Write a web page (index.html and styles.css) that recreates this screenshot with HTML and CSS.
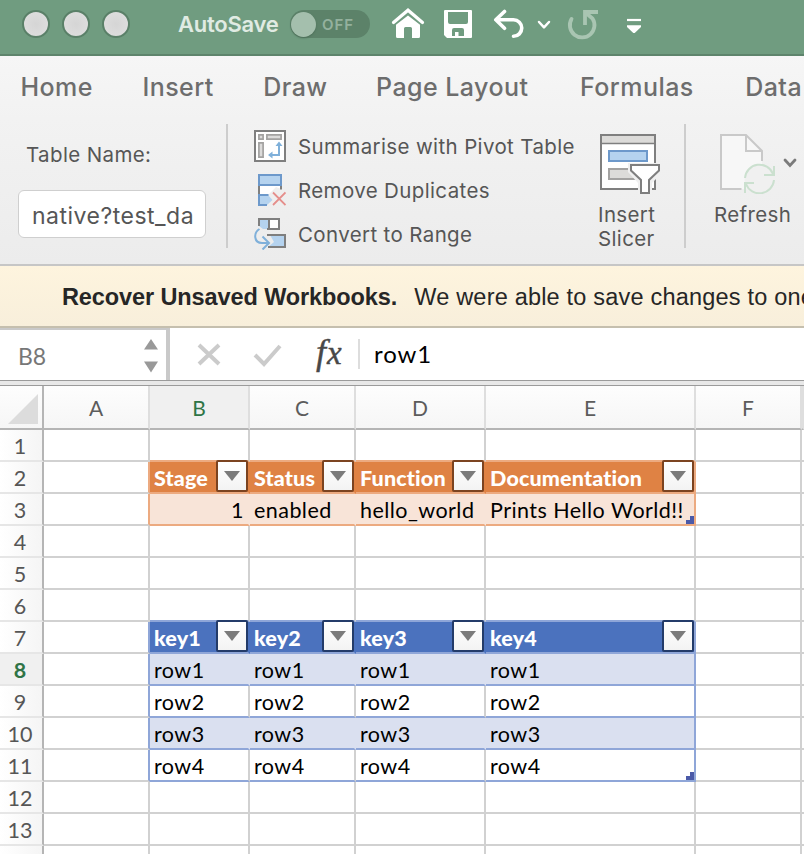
FILE: index.html
```html
<!DOCTYPE html>
<html lang="en">
<head>
<meta charset="utf-8">
<title>Workbook</title>
<link rel="stylesheet" href="styles.css">
</head>
<body>
<header class="titlebar">
  <div class="lights"><span></span><span></span><span></span></div>
  <span class="autosave">AutoSave</span>
  <div class="toggle"><span class="knob"></span><span class="off">OFF</span></div>
  <svg class="quick" width="270" height="54" viewBox="380 0 270 54" fill="none" stroke="#fff">
    <path d="M393.500 22.500L408 10.200L422.500 22.500" stroke-width="3.200" stroke-linecap="round"/>
    <path d="M396 24.800L408 15.400L420 24.800V36.500Q420 38 418.500 38H412V28.500Q412 27 410.500 27H405.500Q404 27 404 28.500V38H397.500Q396 38 396 36.500Z" fill="#fff" stroke="none"/>
    <path fill="#fff" stroke="none" fill-rule="evenodd" d="M445 10H471Q472 10 472 11V37Q472 38 471 38H447L444 35V11Q444 10 445 10ZM448 12V22Q448 24 450 24H466Q468 24 468 22V12ZM454 28Q452 28 452 30V36H455V32H458.500V36H464V30Q464 28 462 28Z"/>
    <path d="M504.500 11.500L495.800 19.800L504.500 28.300M496.500 19.800H513.500A8 8 0 0 1 513.500 36.300" stroke-width="3.600" stroke-linecap="round" stroke-linejoin="round"/>
    <path d="M539 22L544 27.300L549 22" stroke-width="2.500" stroke-linecap="round" stroke-linejoin="round"/>
    <g stroke="#a9c5b2" stroke-width="3.800"><path d="M571.500 19A12.300 12.300 0 1 0 592.500 18.500L586 13" stroke-linecap="round"/><path d="M598 12H585V25"/></g>
    <path d="M627 20H641" stroke-width="2.200"/><path d="M627 25.300H641V27L634.700 33H633.300L627 27Z" fill="#fff" stroke="none"/>
  </svg>
</header>
<section class="ribbon">
  <nav class="tabs"><a>Home</a><a>Insert</a><a>Draw</a><a class="tight">Page Layout</a><a class="loose">Formulas</a><a class="loose">Data</a></nav>
  <div class="tools">
    <div class="name-group"><label>Table Name:</label><div class="field">native?test_da</div></div>
    <div class="commands">
      <div class="command">
        <svg width="32" height="32" fill="none"><path d="M1 1H31V31H1Z" fill="#fff" stroke="#7f7f7f" stroke-width="2"/><g fill="#dcdbda" stroke="#a3a2a1" stroke-width="1.700"><path d="M4.900 4.900H9.100V9.100H4.900ZM12.900 4.900H27.100V9.100H12.900ZM4.900 12.900H9.100V27.100H4.900Z"/></g><path d="M25 15V25H17" stroke="#7fb0da" stroke-width="2"/><path d="M21.500 16L25 11.500L28.500 16ZM18.500 21.500L14 25L18.500 28.500Z" fill="#7fb0da"/></svg>
        <span>Summarise with Pivot Table</span>
      </div>
      <div class="command">
        <svg width="32" height="32" fill="none"><path d="M5 12V20H15L22 13L27 15V12Z" fill="#fff"/><path d="M5 12V21M27 12V15.500" stroke="#7f7f7f" stroke-width="2"/><path d="M5 1H27V11H5Z" fill="#b5d3ef" stroke="#6d99cb" stroke-width="2"/><path d="M5 21H14L18.500 26L13 31H5Z" fill="#b5d3ef"/><path d="M14.500 21H5V31H13" stroke="#6d99cb" stroke-width="2"/><path d="M19 18.500L31.500 31M31.500 18.500L19 31" stroke="#e58e8b" stroke-width="1.800"/></svg>
        <span>Remove Duplicates</span>
      </div>
      <div class="command">
        <svg width="32" height="32" fill="none"><path d="M5 1H15V11H9L5 8Z" fill="#b5d3ef"/><path d="M16 1H25V11H16Z" fill="#fff"/><path d="M5 8V1H25V11H13M15 1V11" stroke="#7f7f7f" stroke-width="2"/><path d="M16 17H31V29H14L20 24Z" fill="#b5d3ef"/><path d="M13 17H31V29H14" stroke="#7f7f7f" stroke-width="2"/><path d="M5.500 11C-1 15 0 25 8 25H14M8.500 18.500L15 25L8.500 31.500" stroke="#7fb0da" stroke-width="2"/></svg>
        <span>Convert to Range</span>
      </div>
    </div>
    <div class="big slicer">
      <svg width="60" height="60" fill="none"><path d="M1 1H55V55H1Z" fill="#fff" stroke="#7f7f7f" stroke-width="2"/><path d="M2 2H54V9H2Z" fill="#dcdbd9"/><path d="M1 9.500H55" stroke="#7f7f7f" stroke-width="1.600"/><path d="M9 17H47V27H9Z" fill="#b5d3ef" stroke="#6d99cb" stroke-width="2"/><path d="M9 35H40V45H9Z" fill="#dcdbd9" stroke="#a3a2a1" stroke-width="2"/><path d="M28 29H62V39L52 49V62H38V49L28 38Z" fill="#f0f0f0"/><path d="M31 31H59V36.500L49 46V59H41V46L31 36.500Z" fill="#fff" stroke="#7f7f7f" stroke-width="2"/></svg>
      <span>Insert<br>Slicer</span>
    </div>
    <div class="big refresh">
      <svg width="78" height="60" viewBox="0 0 78 60" fill="none"><path d="M1 1H26L42 17V30L26 55H1Z" fill="#f7f7f7"/><path d="M21.500 55H1V1H26L42 17V27M26 1V17H42" stroke="#c9c9c9" stroke-width="2"/><path d="M39 30.500A14.500 14.500 0 1 0 39 59.500A14.500 14.500 0 0 0 39 30.500" fill="#f0f0f0"/><g stroke="#cbe0cf" stroke-width="2"><path d="M25 44A14.500 14.500 0 0 1 53 40M54 32V41H44M54 46A14.500 14.500 0 0 1 26 50M25 59V49H34"/></g><path d="M65 26L70 31.500L75 26" stroke="#7b7b7b" stroke-width="2.800" stroke-linecap="round"/></svg>
      <span>Refresh</span>
    </div>
  </div>
</section>
<div class="message"><b>Recover Unsaved Workbooks.</b><span>We were able to save changes to one</span></div>
<div class="formula">
  <div class="namebox"><span>B8</span><svg width="14" height="34"><path d="M7 0L14 10.500H0ZM0 22.500H14L7 33.500Z" fill="#999"/></svg></div>
  <svg class="actions" width="90" height="30" fill="none" stroke="#cbcbcb" stroke-width="4"><path d="M3 6L23 25M23 6L3 25"/><path d="M59 16L68 25L84 7"/></svg>
  <span class="fx"><i>f</i><i class="x">x</i></span>
  <span class="value">row1</span>
</div>
<div class="split"></div>
<main class="sheet">
  <div class="row head"><span class="corner"><svg width="30" height="30"><path d="M30 0V30H0Z" fill="#dcdcdc"/></svg></span><span>A</span><span class="on">B</span><span>C</span><span>D</span><span>E</span><span>F</span><span></span></div>
  <div class="row above-orange"><b>1</b><i></i><i></i><i></i><i></i><i></i><i></i><i></i></div>
  <div class="row orange th"><b>2</b><i></i><i>Stage<u></u></i><i>Status<u></u></i><i>Function<u></u></i><i>Documentation<u></u></i><i></i><i></i></div>
  <div class="row orange band"><b>3</b><i></i><i class="num">1</i><i>enabled</i><i>hello_world</i><i>Prints Hello World!!<s></s></i><i></i><i></i></div>
  <div class="row"><b>4</b><i></i><i></i><i></i><i></i><i></i><i></i><i></i></div>
  <div class="row"><b>5</b><i></i><i></i><i></i><i></i><i></i><i></i><i></i></div>
  <div class="row above-blue"><b>6</b><i></i><i></i><i></i><i></i><i></i><i></i><i></i></div>
  <div class="row blue th"><b>7</b><i></i><i>key1<u></u></i><i>key2<u></u></i><i>key3<u></u></i><i>key4<u></u></i><i></i><i></i></div>
  <div class="row blue band"><b class="on">8</b><i></i><i>row1</i><i>row1</i><i>row1</i><i>row1</i><i></i><i></i></div>
  <div class="row blue"><b>9</b><i></i><i>row2</i><i>row2</i><i>row2</i><i>row2</i><i></i><i></i></div>
  <div class="row blue band"><b>10</b><i></i><i>row3</i><i>row3</i><i>row3</i><i>row3</i><i></i><i></i></div>
  <div class="row blue"><b>11</b><i></i><i>row4</i><i>row4</i><i>row4</i><i>row4<s></s></i><i></i><i></i></div>
  <div class="row"><b>12</b><i></i><i></i><i></i><i></i><i></i><i></i><i></i></div>
  <div class="row"><b>13</b><i></i><i></i><i></i><i></i><i></i><i></i><i></i></div>
  <div class="row"><b></b><i></i><i></i><i></i><i></i><i></i><i></i><i></i></div>
</main>
</body>
</html>
```
FILE: styles.css
```css
* { box-sizing: border-box; }
body { margin: 0; width: 804px; height: 854px; overflow: hidden; background: #fff; display: flex; flex-direction: column; font-family: Inter, sans-serif; color: #565656; }
body > * { flex: none; }

.titlebar { height: 56px; background: #709c80; border-bottom: 2px solid #5e846c; display: flex; align-items: flex-start; }
.lights { display: flex; gap: 12px; padding: 10px 0 0 22px; }
.lights span { width: 28px; height: 28px; border-radius: 50%; border: 2px solid #5a8068; background: radial-gradient(#d5d5d5, #e0e0e0); }
.autosave { margin-left: 48px; width: 112px; line-height: 48px; font-size: 22px; font-weight: 600; letter-spacing: -.25px; color: #e0ebe3; white-space: nowrap; }
.toggle { width: 80px; height: 28px; margin-top: 10px; border-radius: 14px; background: #5c8269; display: flex; align-items: center; }
.knob { width: 25px; height: 25px; margin-left: 1px; border-radius: 50%; background: #a4bfad; box-shadow: 0 1px 2px #4b6d57; }
.off { margin-left: 6px; font-size: 15px; font-weight: 600; letter-spacing: .9px; color: #94b19e; }
.quick { margin-left: 10px; }

.ribbon { height: 210px; background: linear-gradient(#f6f6f6, #f2f2f2 30%, #ececec); border-bottom: 2px solid #c6c6c6; }
.tabs { height: 68px; display: flex; gap: 49.500px; padding: 8px 0 0 20.500px; line-height: 46px; font-size: 25px; font-weight: 500; letter-spacing: .45px; color: #6d6d6d; white-space: nowrap; }
.tabs .tight { margin-left: -1px; }
.tabs .loose { margin-left: 2px; }
.tools { height: 124px; display: flex; font-size: 20.5px; letter-spacing: .37px; white-space: nowrap; }
.name-group { width: 228px; border-right: 2px solid #cdcdcd; padding-left: 18px; }
.name-group label { display: block; height: 66px; padding-left: 8px; line-height: 61px; }
.field { width: 188px; height: 48px; border: 1.500px solid #cfcfcf; border-radius: 6px; background: #fff; padding-left: 13px; line-height: 51px; font-size: 23px; letter-spacing: .5px; }
.commands { width: 372px; padding-left: 26px; }
.command { height: 44px; display: flex; align-items: center; gap: 12px; }
.big { display: flex; flex-direction: column; padding-top: 10px; line-height: 24px; }
.big svg { flex: none; }
.big span { margin-top: 9px; }
.slicer { width: 86px; border-right: 2px solid #cdcdcd; }
.slicer span { width: 56px; margin-left: -2px; margin-top: 9px; text-align: center; }
.refresh { padding-left: 34px; }
.refresh span { margin-left: -6px; }

.message { height: 62px; background: linear-gradient(#fef4de, #f8efdb); border-bottom: 2px solid #c5bfae; padding-left: 62px; line-height: 63px; font-family: "Liberation Sans", sans-serif; font-size: 23.500px; color: #262626; white-space: nowrap; overflow: hidden; }
.message b { letter-spacing: -.1px; }
.message span { margin-left: 17px; letter-spacing: .2px; }

.formula { height: 52px; display: flex; align-items: center; overflow: hidden; }
.namebox { width: 170px; height: 52px; border-top: 2px solid #c9c9c9; border-right: 4px solid #c9c9c9; padding: 2px 8px 0 18px; display: flex; justify-content: space-between; align-items: center; font: 23px/48px Lato, sans-serif; color: #777; }
.actions { margin-left: 26px; }
.fx { width: 46px; height: 30px; margin-left: 28px; border-right: 2px solid #ddd; font: 36px/26px "Liberation Serif", serif; color: #484848; white-space: nowrap; -webkit-text-stroke: .4px #484848; }
.fx i { margin-left: 2px; }
.fx .x { margin-left: 1px; font-size: 33px; }
.value { margin-left: 14px; font: 24px/48px Lato, sans-serif; letter-spacing: .9px; color: #000; }
.split { height: 6px; background: #e8e8e8; border-top: 1px solid #9b9b9b; border-bottom: 1px solid #9b9b9b; }

.sheet { font-family: Lato, sans-serif; }
.row { display: grid; grid-template-columns: 44px 106px 100px 106px 130px 210px 106px 2px; grid-template-rows: 100%; height: 32px; }
.row > * { border: solid #d1d1d1; border-width: 0 2px 2px 0; min-width: 0; min-height: 0; }
.row > i { position: relative; padding-left: 4px; font-style: normal; font-size: 21.5px; line-height: 32px; letter-spacing: .45px; color: #000; white-space: nowrap; }
.row > b { border-right-color: #b5b5b5; border-bottom-color: #e6e6e6; background: linear-gradient(90deg, #fff, #f5f5f5); text-align: center; font-weight: 400; font-size: 21.5px; line-height: 33px; padding-right: 2px; color: #565656; }
.row > .on { color: #2f7446; background: #f0f0f0; }
.row > b.on { font-weight: 700; }
.row.head { height: 44px; }
.head > span { background: linear-gradient(#fdfdfd, #f6f6f6); border-color: #dedede; border-bottom-color: #b5b5b5; text-align: center; font-size: 21px; line-height: 44px; color: #5c5c5c; }
.head > .corner { border-right-color: #b5b5b5; padding: 8px 0 0 8px; line-height: 0; text-align: left; }

.orange { --fill: #df8244; --band: #f8e4d8; --line: #ecaa80; --edge: #7b4320; }
.blue { --fill: #4b72be; --band: #dae0f0; --line: #8fa6d8; --edge: #233b69; }
.above-orange > i:nth-child(n+3):nth-child(-n+6) { border-bottom-color: #ecaa80; }
.above-blue > i:nth-child(n+3):nth-child(-n+6) { border-bottom-color: #8fa6d8; }
.orange > i:nth-child(n+3):nth-child(-n+6), .blue > i:nth-child(n+3):nth-child(-n+6) { border-bottom-color: var(--line); }
.th > i:nth-child(n+3):nth-child(-n+6) { background: var(--fill); border-right-color: var(--fill); color: #fff; font-weight: 900; letter-spacing: .15px; }
.band > i:nth-child(n+3):nth-child(-n+6) { background: var(--band); border-right-color: var(--band); }
.orange > i:nth-child(6):nth-child(n+6), .blue > i:nth-child(6):nth-child(n+6) { border-right-color: var(--line); }
.orange > i:nth-child(2), .blue > i:nth-child(2) { border-right-color: var(--line); }
.row > .num { text-align: right; padding-right: 4px; }

/* filter buttons overlap the header's top border */
.th u { position: absolute; right: 0; top: -2px; width: 32px; height: 32px; border: 2px solid var(--edge); border-radius: 2px; background: linear-gradient(#fff, #f3f3f3); }
.th u::after { content: ""; position: absolute; left: 6px; top: 9px; border: solid transparent; border-width: 10px 8px 0; border-top-color: #7b7b7b; }
/* table resize handle */
.row s { position: absolute; right: 0; bottom: 0; width: 8px; height: 8px; background: #4b5aa8; clip-path: polygon(50% 0, 100% 0, 100% 100%, 0 100%, 0 50%, 50% 50%); }
```
